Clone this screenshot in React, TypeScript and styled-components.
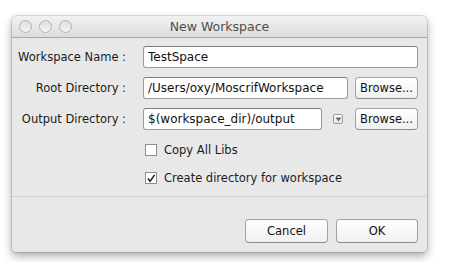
import * as React from "react";
import styled, { createGlobalStyle } from "styled-components";

const GlobalStyle = createGlobalStyle`
  body {
    margin: 0;
    background: #ffffff;
    font-family: "DejaVu Sans", "Liberation Sans", sans-serif;
  }
`;

const Light = () => <Dot />;

const App = (): JSX.Element => {
  return (
    <Page>
      <GlobalStyle />
      <Window>
        <TitleBar>
          <Lights>
            <Light />
            <Light />
            <Light />
          </Lights>
          <Title>New Workspace</Title>
        </TitleBar>

        <Body>
          <Form>
            <Row>
              <Label>Workspace Name :</Label>
              <Field value="TestSpace" $grow />
            </Row>
            <Row>
              <Label>Root Directory :</Label>
              <Field value="/Users/oxy/MoscrifWorkspace" $width={205} />
              <Button $width={63}>Browse...</Button>
            </Row>
            <Row>
              <Label>Output Directory :</Label>
              <Field value="$(workspace_dir)/output" $width={179} />
              <Drop>
                <svg width="7" height="5" viewBox="0 0 7 5">
                  <path d="M0.5 0.5 L6.5 0.5 L3.5 4.5 Z" fill="#6a6a6a" />
                </svg>
              </Drop>
              <Button $width={63}>Browse...</Button>
            </Row>
          </Form>

          <Checks>
            <CheckRow>
              <Box />
              <span>Copy All Libs</span>
            </CheckRow>
            <CheckRow>
              <Box>
                <svg width="11" height="11" viewBox="0 0 11 11">
                  <path
                    d="M2 5.5 L4.5 8.5 L9.5 1.5"
                    fill="none"
                    stroke="#1a1a1a"
                    strokeWidth="1.6"
                  />
                </svg>
              </Box>
              <span>Create directory for workspace</span>
            </CheckRow>
          </Checks>
        </Body>

        <Footer>
          <Button $width={83} $tall>
            Cancel
          </Button>
          <Button $width={82} $tall>
            OK
          </Button>
        </Footer>
      </Window>
    </Page>
  );
};

export default App;

const Page = styled.div`
  width: 449px;
  height: 262px;
  padding: 16px 0 0 12px;
  box-sizing: border-box;
`;

const Window = styled.div`
  width: 415px;
  height: 236px;
  background: #e8e8e8;
  border-radius: 5px 5px 4px 4px;
  box-shadow: 0 4px 10px rgba(0, 0, 0, 0.35), 0 0 0 1px rgba(0, 0, 0, 0.12);
  display: flex;
  flex-direction: column;
  overflow: hidden;
  font-size: 11.5px;
  color: #1c1c1c;
`;

const TitleBar = styled.div`
  height: 21px;
  border-bottom: 1px solid #a9a9a9;
  background: linear-gradient(#f2f2f2, #dddddd);
  display: flex;
  align-items: center;
  position: relative;
`;

const Lights = styled.div`
  display: flex;
  gap: 7px;
  padding-left: 7px;
`;

const Dot = styled.div`
  width: 11px;
  height: 11px;
  border-radius: 50%;
  border: 1px solid #b4b4b4;
  background: linear-gradient(#dedede, #f4f4f4);
`;

const Title = styled.div`
  position: absolute;
  left: 0;
  right: 0;
  text-align: center;
  font-size: 12.5px;
  color: #4d4d4d;
`;

const Body = styled.div`
  padding: 8px 9px 0 0;
  flex: 1;
  border-bottom: 1px solid #cfcfcf;
`;

const Form = styled.div`
  display: flex;
  flex-direction: column;
  gap: 9px;
`;

const Row = styled.div`
  display: flex;
  align-items: center;
  height: 22px;
`;

const Label = styled.div`
  flex: none;
  width: 114px;
  text-align: right;
  margin-right: 17px;
  white-space: nowrap;
`;

const Field = styled.input.attrs({ readOnly: true })<{
  $width?: number;
  $grow?: boolean;
}>`
  box-sizing: border-box;
  height: 22px;
  width: ${(p) => (p.$width ? `${p.$width}px` : "auto")};
  min-width: 0;
  flex: ${(p) => (p.$grow ? 1 : "none")};
  border: 1px solid #9c9c9c;
  border-top-color: #7e7e7e;
  border-radius: 3px;
  background: #ffffff;
  padding: 0 4px;
  font: inherit;
  font-size: 12px;
  color: #111;
  outline: none;
`;

const Drop = styled.div`
  flex: none;
  width: 8px;
  height: 8px;
  margin: 0 5px 0 11px;
  border: 1px solid #9a9a9a;
  border-radius: 2px;
  background: linear-gradient(#ffffff, #e6e6e6);
  display: flex;
  align-items: center;
  justify-content: center;
`;

const Button = styled.div<{ $width: number; $tall?: boolean }>`
  flex: none;
  box-sizing: border-box;
  width: ${(p) => p.$width}px;
  height: ${(p) => (p.$tall ? 24 : 22)}px;
  margin-left: ${(p) => (p.$tall ? 0 : 7)}px;
  border: 1px solid #a2a2a2;
  border-bottom-color: #8c8c8c;
  border-radius: 4px;
  background: linear-gradient(#ffffff, #f0f0f0);
  display: flex;
  align-items: center;
  justify-content: center;
  color: #111;
`;

const Checks = styled.div`
  display: flex;
  flex-direction: column;
  gap: 16px;
  padding: 14px 0 0 133px;
`;

const CheckRow = styled.div`
  display: flex;
  align-items: center;
  gap: 7px;
  height: 12px;
`;

const Box = styled.div`
  box-sizing: border-box;
  width: 12px;
  height: 12px;
  border: 1px solid #8e8e8e;
  background: #ffffff;
  display: flex;
  align-items: center;
  justify-content: center;
`;

const Footer = styled.div`
  height: 55px;
  box-sizing: border-box;
  padding: 22px 9px 0 0;
  display: flex;
  justify-content: flex-end;
  gap: 8px;
`;
